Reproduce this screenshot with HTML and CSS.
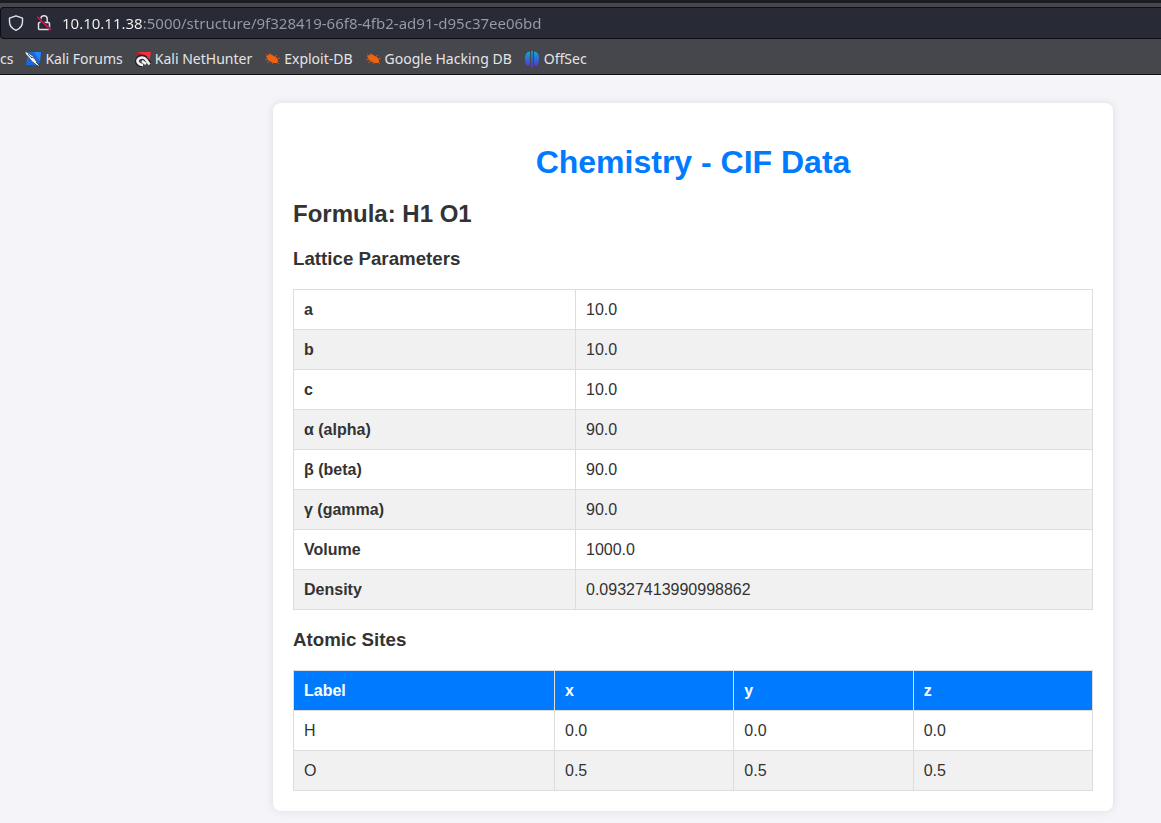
FILE: index.html
```html
<!DOCTYPE html>
<html lang="en">
<head>
<meta charset="utf-8">
<meta name="viewport" content="width=device-width, initial-scale=1">
<title>Chemistry - CIF Data</title>
<link rel="stylesheet" href="styles.css">
</head>
<body>
<header class="browser">
  <div class="url-bar">
    <button class="icon-button" type="button" aria-label="Tracking protection">
      <svg class="icon" viewBox="0 0 16 16" fill="none" stroke="#e4e4e8" stroke-width="1.4" stroke-linejoin="round"><path d="M8 .8 14.5 3.2v3.5c0 3.7-2.4 6.8-6.5 8.6C3.900 13.500 1.500 10.400 1.500 6.700V3.200z"/></svg>
    </button>
    <button class="icon-button" type="button" aria-label="Connection is not secure">
      <svg class="icon" viewBox="0 0 16 16" fill="none"><path d="M4.800 6.500V4a3.200 3.200 0 0 1 6.400 0v3.500M4.500 7.500h-1a1 1 0 0 0-1 1v5a1 1 0 0 0 1 1h9a1 1 0 0 0 1-1v-5a1 1 0 0 0-1-1h-5" stroke="#dedee2" stroke-width="1.500"/><path d="M1.500 1.800 14.800 14.800" stroke="#282a36" stroke-width="2.400"/><path d="M1.200 1.800 14.800 15" stroke="#f0104c" stroke-width="1.600"/></svg>
    </button>
    <input class="url" type="text" aria-label="Address" spellcheck="false" value="10.10.11.38:5000/structure/9f328419-66f8-4fb2-ad91-d95c37ee06bd">
  </div>
  <nav class="bookmarks" aria-label="Bookmarks">
    <a class="bookmark" href="#">cs</a>
    <a class="bookmark" href="#">
      <svg class="icon" viewBox="0 0 16 16"><path d="M3 1h13l-2 13H1z" fill="#1769e0"/><path d="M9 1h7l-1 9z" fill="#2584ff"/><path d="M0 0 3 2l5 3 3 5 4.500 6-4-2-5-4-3-4-3-3z" fill="#f5f5f5" stroke="#25282e" stroke-width=".6"/><path d="m3 3 4 4M6 6l3 1m2 4 4 4" stroke="#25282e" stroke-width=".7"/></svg>
      Kali Forums</a>
    <a class="bookmark" href="#">
      <svg class="icon" viewBox="0 0 16 16"><path d="M2 2 4 1h12l-2 11-7-5z" fill="#f4303c"/><path d="M1 3 4 1l4 4-5 3z" fill="#b51c2c"/><path d="M7 14C3 14 1 11 3 8s6-3 8 0l4 5" fill="none" stroke="#222329" stroke-width="4.400"/><path d="M8 14C4 14 1.500 11 3 8.500s6-3 8 0l3.500 5M7 10l4 3" fill="none" stroke="#f4f4f4" stroke-width="2.600"/></svg>
      Kali NetHunter</a>
    <a class="bookmark" href="#">
      <svg class="icon" viewBox="0 0 16 16"><path d="M2 5 6 3l6 3 2 3v3H9L4 9z" fill="#f0620d"/><path d="m4 5-2-2M7 4 6 2m4 4 3-2m0 4 3-1M4 8l-3 1m5 1-3 2m6-1-1 2m5-2 2 2" stroke="#b9571f" stroke-width="1"/></svg>
      Exploit-DB</a>
    <a class="bookmark" href="#">
      <svg class="icon" viewBox="0 0 16 16"><path d="M2 5 6 3l6 3 2 3v3H9L4 9z" fill="#f0620d"/><path d="m4 5-2-2M7 4 6 2m4 4 3-2m0 4 3-1M4 8l-3 1m5 1-3 2m6-1-1 2m5-2 2 2" stroke="#b9571f" stroke-width="1"/></svg>
      Google Hacking DB</a>
    <a class="bookmark" href="#">
      <svg class="icon" viewBox="0 0 16 16"><defs><linearGradient id="offsec" x1="0" y1="0" x2="0" y2="16" gradientUnits="userSpaceOnUse"><stop stop-color="#10acd0"/><stop offset=".55" stop-color="#3068d2"/><stop offset="1" stop-color="#6a2de0"/></linearGradient></defs><path d="M6 .5v13L3.500 15C0 12 0 3 4 1zM10 .5v13l2.500 1.500C16 12 16 3 12 1zM7.200 0h1.600v16H7.200z" fill="url(#offsec)"/></svg>
      OffSec</a>
  </nav>
</header>
<main class="page">
  <div class="container">
    <h1>Chemistry - CIF Data</h1>
    <h2>Formula: H1 O1</h2>
    <h3 id="lattice">Lattice Parameters</h3>
    <table class="lattice" aria-labelledby="lattice">
      <tbody>
        <tr><th scope="row">a</th><td>10.0</td></tr>
        <tr><th scope="row">b</th><td>10.0</td></tr>
        <tr><th scope="row">c</th><td>10.0</td></tr>
        <tr><th scope="row">α (alpha)</th><td>90.0</td></tr>
        <tr><th scope="row">β (beta)</th><td>90.0</td></tr>
        <tr><th scope="row">γ (gamma)</th><td>90.0</td></tr>
        <tr><th scope="row">Volume</th><td>1000.0</td></tr>
        <tr><th scope="row">Density</th><td>0.09327413990998862</td></tr>
      </tbody>
    </table>
    <h3 id="sites">Atomic Sites</h3>
    <table class="sites" aria-labelledby="sites">
      <thead>
        <tr><th scope="col">Label</th><th scope="col">x</th><th scope="col">y</th><th scope="col">z</th></tr>
      </thead>
      <tbody>
        <tr><td>H</td><td>0.0</td><td>0.0</td><td>0.0</td></tr>
        <tr><td>O</td><td>0.5</td><td>0.5</td><td>0.5</td></tr>
      </tbody>
    </table>
  </div>
</main>
</body>
</html>
```
FILE: styles.css
```css
* {
  box-sizing: border-box;
}

body {
  margin: 0;
  min-height: 100vh;
  background: #f4f4f9;
  color: #333;
  font: 16px/19px "Liberation Sans", Arial, sans-serif;
}

.browser {
  padding-top: 4px;
  background: #45474d;
  border-top: 3px solid #1b1c20;
  border-bottom: 1px solid #0d0e12;
  font-family: "Noto Sans", sans-serif;
}

.url-bar {
  display: flex;
  align-items: center;
  gap: 12px;
  height: 32px;
  padding-left: 7px;
  background: #282a36;
  border: 1px solid #0d0e12;
  border-right: 0;
  border-radius: 4px 0 0 4px;
}

.icon-button {
  display: flex;
  padding: 0;
  border: 0;
  background: none;
}

.icon {
  flex: none;
  width: 16px;
  height: 16px;
}

.url {
  flex: 1;
  min-width: 0;
  height: 24px;
  margin-left: -2px;
  padding: 0;
  border: 0;
  outline: 0;
  color: #9b9ca2;
  font: 15px/24px "Noto Sans", sans-serif;
  /* The host is brighter than the port and path. */
  background: linear-gradient(to right, #f8f8f2 80px, #9b9ca2 80px);
  background-clip: text;
  -webkit-background-clip: text;
  -webkit-text-fill-color: transparent;
}

.bookmarks {
  display: flex;
  gap: 12px;
  height: 35px;
  padding-top: 4px;
  align-items: center;
}

.bookmark {
  display: flex;
  align-items: center;
  gap: 4px;
  color: #e4e4e6;
  font-size: 14px;
  line-height: 20px;
  text-decoration: none;
  white-space: nowrap;
}

.page {
  padding: 28px 48px 12px;
}

.container {
  max-width: 840px;
  margin-left: auto;
  padding: 20px;
  background: #fff;
  border-radius: 8px;
  box-shadow: 0 0 10px rgba(0, 0, 0, 0.1);
}

h1 {
  margin: 21px 0 20px;
  color: #007bff;
  font-size: 32px;
  line-height: 36px;
  text-align: center;
}

h2 {
  margin: 20px 0 22px;
  font-size: 24px;
  line-height: 27px;
}

h3 {
  margin: 20px 0;
  line-height: 20px;
}

table {
  width: 100%;
  border-collapse: collapse;
}

th,
td {
  padding: 10px;
  border: 1px solid #ddd;
  text-align: left;
}

tbody tr:nth-child(even) {
  background: #f1f1f1;
}

thead th {
  background: #007bff;
  color: #fff;
}

.lattice th {
  width: 282px;
}

.sites {
  table-layout: fixed;
}

.sites th:first-child {
  width: 261px;
}
```
